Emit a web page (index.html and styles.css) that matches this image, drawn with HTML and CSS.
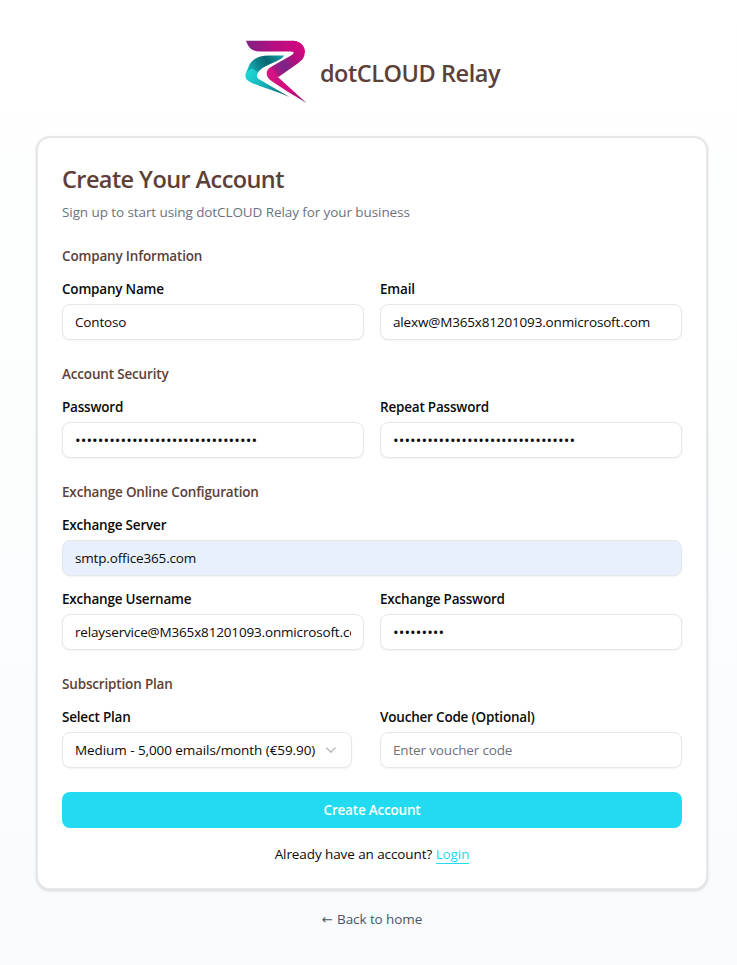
FILE: index.html
```
<!DOCTYPE html>
<html lang="en">
<head>
<meta charset="utf-8">
<title>dotCLOUD Relay</title>
<link rel="stylesheet" href="styles.css">
</head>
<body>
<main class="page">
  <header class="brand">
    <svg class="brand-logo" viewBox="0 0 64 64" width="64" height="64" aria-hidden="true">
      <defs>
        <linearGradient id="top" x1="0" y1="0" x2="1" y2="0">
          <stop offset="0" stop-color="#7d2383"/><stop offset=".5" stop-color="#b80d80"/><stop offset="1" stop-color="#d5067f"/>
        </linearGradient>
        <linearGradient id="bowl" gradientUnits="userSpaceOnUse" x1="61" y1="10" x2="25" y2="34">
          <stop offset="0" stop-color="#d5067f"/><stop offset=".3" stop-color="#b3107e"/><stop offset=".6" stop-color="#792488"/><stop offset=".8" stop-color="#a01a84"/><stop offset="1" stop-color="#d5107f"/>
        </linearGradient>
        <linearGradient id="leg" gradientUnits="userSpaceOnUse" x1="24" y1="30" x2="62" y2="63">
          <stop offset="0" stop-color="#d61684"/><stop offset=".6" stop-color="#d0087e"/><stop offset="1" stop-color="#842078"/>
        </linearGradient>
        <linearGradient id="teal" gradientUnits="userSpaceOnUse" x1="4" y1="36" x2="38" y2="15">
          <stop offset="0" stop-color="#19c5c6"/><stop offset=".35" stop-color="#0d8790"/><stop offset=".6" stop-color="#086672"/><stop offset="1" stop-color="#139fa7"/>
        </linearGradient>
        <linearGradient id="tealLeg" gradientUnits="userSpaceOnUse" x1="2" y1="34" x2="44" y2="57">
          <stop offset="0" stop-color="#1ed8d8"/><stop offset=".5" stop-color="#12a9b0"/><stop offset="1" stop-color="#07505f"/>
        </linearGradient>
      </defs>
      <path fill="url(#teal)" d="M40 15.500H25C14 15.500 7 19.500 4.500 27L1.500 34L3 40L12.500 36C13.500 31.500 17 28.500 23 25.500L34 20.500C37 19 39 17.500 40 15.500Z"/>
      <path fill="url(#tealLeg)" d="M8 28.500C-.5 32.500 -.3 38.500 6 42C18 48 32 51 45.500 57L15.500 39.500C12.300 37.500 12 35.500 14 32.500C12 31 10 29.500 8 28.500Z"/>
      <path fill="url(#bowl)" d="M48 .7C57 .7 62 7 60.500 14.500C60 18.500 57 21 53 24L34.500 37L24 33C23.500 30 25.500 28 28.500 26L47 15.500C50.500 13.500 50.500 11.600 47 11.600Z"/>
      <path fill="url(#top)" d="M2 .7H48C56.500 .7 61.500 6.500 60.800 13C58 11.600 54 11.600 47 11.600H16C8 11.600 4 7 2 .7Z"/>
      <path fill="url(#leg)" d="M26.500 27.300C21.500 30.500 21 36.500 27.500 41C39 49 51 56 62.500 63L35.500 38.500C32.500 36 31.500 34 31.800 31.500C29.500 30.500 27.500 29 26.500 27.300Z"/>
    </svg>
    <span class="brand-name">dotCLOUD Relay</span>
  </header>

  <section class="card">
    <h1 class="title">Create Your Account</h1>
    <p class="subtitle">Sign up to start using dotCLOUD Relay for your business</p>

    <form class="form">
      <fieldset class="group">
        <h2 class="heading">Company Information</h2>
        <div class="row">
          <div class="field"><label for="company">Company Name</label><input id="company" type="text" value="Contoso"></div>
          <div class="field"><label for="email">Email</label><input id="email" type="text" value="alexw@M365x81201093.onmicrosoft.com"></div>
        </div>
      </fieldset>

      <fieldset class="group">
        <h2 class="heading">Account Security</h2>
        <div class="row">
          <div class="field"><label for="pw">Password</label><input id="pw" class="secret" type="password" value="12345678901234567890123456789012"></div>
          <div class="field"><label for="pw2">Repeat Password</label><input id="pw2" class="secret" type="password" value="12345678901234567890123456789012"></div>
        </div>
      </fieldset>

      <fieldset class="group">
        <h2 class="heading">Exchange Online Configuration</h2>
        <div class="field"><label for="server">Exchange Server</label><input id="server" class="autofilled" type="text" value="smtp.office365.com"></div>
        <div class="row">
          <div class="field"><label for="user">Exchange Username</label><input id="user" type="text" value="relayservice@M365x81201093.onmicrosoft.com"></div>
          <div class="field"><label for="expw">Exchange Password</label><input id="expw" class="secret" type="password" value="123456789"></div>
        </div>
      </fieldset>

      <fieldset class="group">
        <h2 class="heading">Subscription Plan</h2>
        <div class="row">
          <div class="field">
            <label id="plan-label">Select Plan</label>
            <button class="select" type="button" aria-labelledby="plan-label">
              <span>Medium - 5,000 emails/month (€59.90)</span>
              <svg class="chevron" viewBox="0 0 16 16" width="16" height="16" aria-hidden="true"><path d="M3.7 6L8 10.3L12.3 6"/></svg>
            </button>
          </div>
          <div class="field"><label for="voucher">Voucher Code (Optional)</label><input id="voucher" type="text" placeholder="Enter voucher code"></div>
        </div>
      </fieldset>

      <button class="submit" type="button"><span>Create Account</span></button>
    </form>
    <p class="login"><span>Already have an account?</span> <a href="#">Login</a></p>
  </section>
  <a class="back" href="#"><span class="arrow">←</span> Back to home</a>
</main>
</body>
</html>
```

FILE: styles.css
```
* { box-sizing: border-box; }
body {
  margin: 0;
  min-height: 965px;
  background: linear-gradient(#fff, #fcfefe 45%, #f9fafd);
  font-family: "Open Sans", "Noto Sans", sans-serif;
  font-size: 13.5px;
  line-height: 20px;
  letter-spacing: -0.09px;
  color: #0a0a0a;
  overflow: hidden;
}
h1, h2, p, fieldset { margin: 0; padding: 0; border: 0; min-width: 0; }
.page {
  width: 672px;
  margin-left: 36px;
  padding-top: 40px;
  display: flex;
  flex-direction: column;
  align-items: center;
}
.brand { display: flex; align-items: center; gap: 12px; height: 64px; margin-bottom: 32px; }
.brand-logo { display: block; }
.brand-name { font-size: 23.5px; line-height: 32px; font-weight: 600; color: #5d4037; letter-spacing: -0.45px; padding-top: 2px; }
.card {
  width: 672px;
  height: 754px;
  padding: 24px;
  background: #fff;
  border: 2px solid #e5e7eb;
  border-radius: 14px;
  box-shadow: 0 1px 3px rgba(0, 0, 0, .1), 0 1px 2px rgba(0, 0, 0, .06);
}
.title { font-size: 23.5px; line-height: 34px; padding-bottom: 2px; font-weight: 600; color: #5d4037; letter-spacing: -0.58px; }
.subtitle { margin-top: 4px; color: #6b7280; }
.form { display: flex; flex-direction: column; gap: 24px; margin-top: 24px; }
.group { display: flex; flex-direction: column; gap: 16px; }
.heading { font-size: 13.5px; line-height: 20px; font-weight: 600; color: #5d4037; letter-spacing: -0.17px; }
.row { display: grid; grid-template-columns: 1fr 1fr; gap: 16px; }
.field { display: flex; flex-direction: column; gap: 8px; min-width: 0; }
label { font-weight: 600; line-height: 14px; letter-spacing: -0.2px; }
input, .select {
  font: inherit;
  letter-spacing: -0.16px;
  color: inherit;
  width: 100%;
  height: 36px;
  padding: 4px 12px;
  background: #fff;
  border: 1px solid #e5e7eb;
  border-radius: 8px;
  box-shadow: 0 1px 2px rgba(0, 0, 0, .05);
}
input::placeholder { color: #6b7280; opacity: 1; }
.secret { font-size: 15px; letter-spacing: 0.05px; }
.autofilled { background: #e8f0fe; }
.select { width: 290px; display: flex; align-items: center; gap: 8px; white-space: nowrap; letter-spacing: -0.07px; }
.chevron { fill: none; stroke: #b5b5b8; stroke-width: 1.3; stroke-linecap: round; stroke-linejoin: round; }
.submit {
  height: 36px;
  border: 0;
  border-radius: 8px;
  background: #22dbf0;
  color: #fff;
  font: inherit;
  font-weight: 600;
  letter-spacing: -0.2px;
}
.login { margin-top: 16px; text-align: center; }
.login a { color: #22dbf0; text-decoration: none; display: inline-block; height: 20px; border-bottom: 1px solid #22dbf0; }
.back { margin-top: 19px; color: #4b5563; text-decoration: none; }
.arrow { font-family: "DejaVu Sans", sans-serif; font-size: 13px; margin-right: 1px; }
```
